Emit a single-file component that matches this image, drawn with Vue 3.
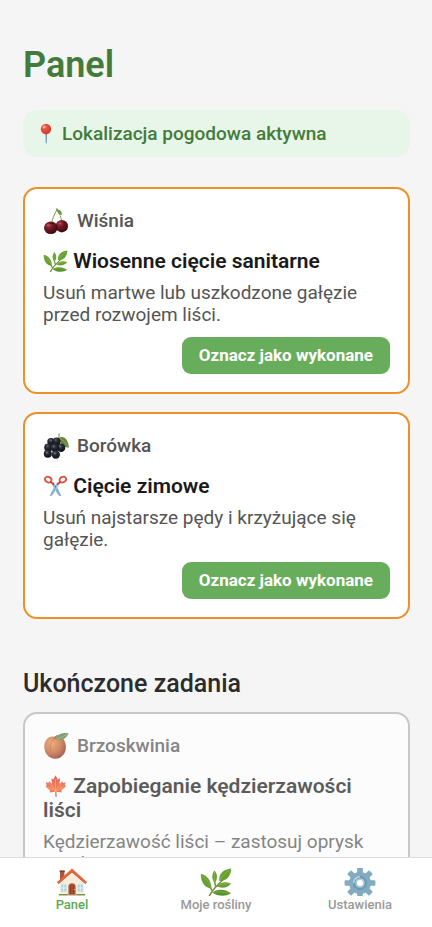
<template>
  <div class="app">
    <!-- kształty ikon używane niżej przez <use> -->
    <svg class="icon-defs" aria-hidden="true">
      <defs>
        <radialGradient id="g-cherry" cx="0.35" cy="0.3" r="0.75">
          <stop offset="0" stop-color="#a83a44" />
          <stop offset="0.35" stop-color="#7a1a26" />
          <stop offset="1" stop-color="#32080f" />
        </radialGradient>
        <radialGradient id="g-berry" cx="0.4" cy="0.32" r="0.7">
          <stop offset="0" stop-color="#5c5e6b" />
          <stop offset="0.35" stop-color="#2b2b37" />
          <stop offset="1" stop-color="#0e0e15" />
        </radialGradient>
        <radialGradient id="g-peach" cx="0.35" cy="0.3" r="0.8">
          <stop offset="0" stop-color="#e9914c" />
          <stop offset="0.5" stop-color="#c75f2b" />
          <stop offset="1" stop-color="#741a10" />
        </radialGradient>
        <linearGradient id="g-maple" x1="0" y1="0" x2="0" y2="1">
          <stop offset="0" stop-color="#d8261c" />
          <stop offset="0.6" stop-color="#f0561f" />
          <stop offset="1" stop-color="#d8301c" />
        </linearGradient>
        <radialGradient id="g-pin" cx="0.35" cy="0.3" r="0.7">
          <stop offset="0" stop-color="#f58a72" />
          <stop offset="0.4" stop-color="#e3503e" />
          <stop offset="1" stop-color="#d23c30" />
        </radialGradient>
      </defs>

      <symbol id="icon-pin" viewBox="0 0 24 24">
        <path d="M11.3 11h1.6l-.3 10-.5 2-.5-2z" fill="#7fa3b8" />
        <path d="M12.3 11h.6l-.4 10-.4 2z" fill="#4f7388" />
        <circle cx="12" cy="6.6" r="5.7" fill="url(#g-pin)" />
        <ellipse cx="9.8" cy="4.5" rx="1.6" ry="1.1" fill="#fbb8a8" opacity="0.8" />
      </symbol>

      <symbol id="icon-cherry" viewBox="0 0 26 28">
        <path d="M14 2.6C11.6 7 9.5 11 8.4 17" fill="none" stroke="#7c9a45" stroke-width="1" />
        <path d="M14 2.6c2.7 4 4.3 8 4.8 13" fill="none" stroke="#8fa554" stroke-width="1" />
        <path d="M13 1.2l2.2.8-1.4 1.6z" fill="#667d35" />
        <path d="M14 2.8c2.2-.8 5 1.2 4.900 5-2.600.2-4.700-1.400-4.900-5z" fill="#669042" />
        <path d="M14.3 3c1.2 2 2.3 3.2 4.3 4.5" fill="none" stroke="#a2bd6c" stroke-width="0.5" />
        <ellipse cx="18.8" cy="19.2" rx="6.2" ry="6.2" fill="url(#g-cherry)" />
        <ellipse cx="7.8" cy="20.8" rx="6.8" ry="6.3" fill="url(#g-cherry)" />
        <ellipse cx="5.2" cy="18.2" rx="1.8" ry="0.7" fill="#ce7078" opacity="0.65" />
        <ellipse cx="17" cy="16.2" rx="1.7" ry="0.7" fill="#c66a70" opacity="0.6" />
        <path d="M6.4 15.8c1.2 1 2.9 1 4 .1" fill="none" stroke="#27070b" stroke-width="0.9" />
      </symbol>

      <symbol id="icon-berry" viewBox="0 0 26 28">
        <path d="M16 1.4c.3 3.6.2 5-2.8 8.6M16.4 6c3 0 4 1.6 4.4 6" fill="none" stroke="#849f4d" stroke-width="1.1" />
        <path d="M16.4 5.8c2.6-2.2 8.4-.6 9.6 9.6-4.6.6-9-2.6-9.6-9.6z" fill="#66813a" />
        <path d="M17.2 6.6c3 1.6 6 4.6 8 8.2" fill="none" stroke="#b2c778" stroke-width="0.6" />
        <circle cx="8" cy="9.6" r="3.7" fill="url(#g-berry)" />
        <circle cx="13.6" cy="9.4" r="3.9" fill="url(#g-berry)" />
        <circle cx="5.2" cy="15.4" r="4" fill="url(#g-berry)" />
        <circle cx="18" cy="15.8" r="4.3" fill="url(#g-berry)" />
        <circle cx="11.6" cy="15.8" r="4.2" fill="url(#g-berry)" />
        <circle cx="4.8" cy="21.8" r="4" fill="url(#g-berry)" />
        <circle cx="12.8" cy="22.6" r="4.2" fill="url(#g-berry)" />
        <g fill="#b9bdca" opacity="0.6">
          <circle cx="8.4" cy="8.2" r="0.6" />
          <circle cx="10.6" cy="14.6" r="0.6" />
          <circle cx="17.4" cy="14.6" r="0.6" />
          <circle cx="3.8" cy="20.6" r="0.6" />
          <circle cx="11.8" cy="21.4" r="0.6" />
        </g>
      </symbol>

      <symbol id="icon-peach" viewBox="0 0 26 28">
        <path d="M12.2 4.8C6 3 1.2 8 1.3 14.8 1.4 21.6 6 26.8 12.2 26.8S22.9 21.6 22.9 15C22.9 8 18.4 3.6 12.2 4.8z" fill="url(#g-peach)" />
        <path d="M12.4 6c-4 2-6 7-5 12.6.6 3.4 2 6 4 7.8" fill="none" stroke="#a64a2b" stroke-width="0.9" opacity="0.75" />
        <path d="M11.2 7c1-2.4 2-3.2 3.6-3.8" fill="none" stroke="#5e4630" stroke-width="1.2" />
        <path d="M12.8 7.6c.8-4.6 5.6-7.4 12.8-6.4-2 5.2-6.6 7.8-12.8 6.4z" fill="#4f7a38" />
        <path d="M13.6 7.2c3.2-1 7-2.6 11.2-5.6" fill="none" stroke="#a9c490" stroke-width="0.6" />
      </symbol>

      <symbol id="icon-leaf" viewBox="0 0 32 28">
        <path d="M9.5 27.6c2.4-4.8 6.8-9.8 14-16.4M12.2 22.8C10.6 19 8 15 3.6 10.6M15.6 18.2c-1-3-1.4-7-1.2-11" fill="none" stroke="#72933a" stroke-width="1.5" stroke-linecap="round" />
        <path d="M11.4 20.4C5 19.8.9 14.8.8 6c6.4 1 10.6 6.6 10.6 14.4z" fill="#68a032" />
        <path d="M14.8 15c-3.2-3.4-3.4-8.4-.4-12.4 3.2 3.4 3.5 8.4.4 12.4z" fill="#68a032" />
        <path d="M19.2 13C18.6 6 23.4 1.2 31.2.6c-.2 7.4-4.4 12.6-12 12.4z" fill="#68a032" />
        <path d="M16.8 18.6c2.8-4.2 8.2-5.6 14.2-3.2-3 4.2-8.6 5.4-14.2 3.2z" fill="#68a032" />
        <path d="M12.4 24.4c4.6-3.6 12.6-3.4 18.6.8-4.6 3.6-13.6 3.2-18.6-.8z" fill="#5a922c" />
        <path d="M2 7.6c4.8 3 7.4 7 9.2 12M14.4 4v10M29.6 2C25 5 22 8 19.8 12.4M29.4 15.6c-5-.2-8.4.8-12 2.8M29 25c-6-1.4-11-1.4-16-.6" fill="none" stroke="#a0c75e" stroke-width="0.5" />
      </symbol>

      <symbol id="icon-scissors" viewBox="0 0 24 24">
        <path d="M7.5 9.2l2.5-1.4c3.2 4.6 6.6 9.6 8.4 15.2-2 .2-3.2-.6-4-2z" fill="#87b3c8" />
        <path d="M16.5 9.2L14 7.8C10.8 12.4 7.4 17.4 5.600 23c2 .2 3.200-.6 4-2z" fill="#9dc4d5" />
        <path d="M12 14.5L6.6 22" stroke="#5f8fa8" stroke-width="0.6" />
        <circle cx="12" cy="12.9" r="0.9" fill="#456f86" />
        <ellipse cx="4" cy="5" rx="3.7" ry="3" transform="rotate(25 4 5)" fill="none" stroke="#e1493a" stroke-width="1.9" />
        <ellipse cx="20" cy="5" rx="3.7" ry="3" transform="rotate(-25 20 5)" fill="none" stroke="#e1493a" stroke-width="1.9" />
        <path d="M6.8 7.6l2.8 2.2M17.2 7.6l-2.8 2.2" stroke="#d84236" stroke-width="2.1" stroke-linecap="round" />
      </symbol>

      <symbol id="icon-maple" viewBox="0 0 24 24">
        <path d="M12 .4l2.5 4.4 2.5-1.2-.7 6.2 3-3 .8 1.8 3-.6-1 3.2 1.4 1-5.2 4.6.6 2.2-5.9-.8.4 5.4h-1.6l-.2-5.4-6.1.8.6-2.2L1 12.200l1.400-1-1-3.200 3 .6.8-1.800 2.900 3-.6-6.200 2.200 1.200z" fill="url(#g-maple)" />
        <path d="M12 18V4.5M12 17.5L5.8 9M12 17.5L18.4 9M12 17.8l-8.2-4.6M12 17.8l8.4-4.6" fill="none" stroke="#ffae52" stroke-width="0.5" />
      </symbol>

      <symbol id="icon-house" viewBox="0 0 32 28">
        <path d="M4 3.4h4.4V13H4z" fill="#a9583f" />
        <path d="M3.6 2.4h5.2v1.8H3.6z" fill="#7e3f2e" />
        <path d="M4 13L16 2.6 28 13v13.8H4z" fill="#f8edda" />
        <path d="M16 .6L.8 14.2l1.6 1.6L16 4l13.6 11.8 1.6-1.6z" fill="#e4683a" />
        <path d="M2.4 15.8L16 4l13.6 11.8" fill="none" stroke="#ad4426" stroke-width="0.7" />
        <path d="M5.2 16.6h5.2v6.8H5.2zM21.6 16.6h5.2v6.8h-5.2z" fill="#a7d5e4" />
        <path d="M7.8 16.6v6.8M5.2 20h5.2M24.2 16.6v6.8M21.6 20h5.2" stroke="#fff" stroke-width="0.7" />
        <path d="M12.4 27v-8.8c0-4 7.2-4 7.2 0V27z" fill="#b1573a" />
        <path d="M14 26v-7.2c0-2 1.4-2.3 1.4-2.3V26zM16.7 26v-9.5s1.4.3 1.4 2.3V26z" fill="#8c3e2a" />
        <circle cx="18.4" cy="21.6" r="0.6" fill="#f1c65d" />
        <path d="M2.8 26h9v1.6h-9zM20.2 26h9v1.6h-9z" fill="#7b9343" />
        <path d="M12 26.6h8v1h-8z" fill="#b7a58f" />
      </symbol>

      <symbol id="icon-gear" viewBox="0 0 32 28">
        <g fill="#83abc0">
          <rect
            v-for="angle in gearAngles"
            :key="angle"
            x="13.2"
            y="-0.4"
            width="5.6"
            height="7"
            rx="0.8"
            :transform="`rotate(${angle} 16 15)`"
          />
          <circle cx="16" cy="15" r="11" />
        </g>
        <circle cx="16" cy="15" r="7.2" fill="#6d9bb4" />
        <path d="M9.6 15a6.4 6.4 0 0 1 6.4-6.4" fill="none" stroke="#c6dfeb" stroke-width="1.4" />
        <circle cx="16" cy="15" r="4.8" fill="#a9cada" />
        <circle cx="16" cy="15" r="3" fill="#fff" />
      </symbol>
    </svg>

    <main class="content">
      <h1 class="page-title">Panel</h1>

      <div class="location-banner">
        <svg class="pin-icon" aria-hidden="true"><use href="#icon-pin" /></svg>
        <span>Lokalizacja pogodowa aktywna</span>
      </div>

      <section class="task-list">
        <article v-for="task in activeTasks" :key="task.id" class="task-card">
          <div class="plant">
            <svg class="plant-icon" aria-hidden="true"><use :href="`#icon-${task.plantIcon}`" /></svg>
            <span>{{ task.plant }}</span>
          </div>
          <h3 class="task-title">
            <svg class="task-icon" aria-hidden="true"><use :href="`#icon-${task.icon}`" /></svg>
            {{ task.title }}
          </h3>
          <p class="task-desc">{{ task.description }}</p>
          <button type="button" class="done-btn" @click="markDone(task)">Oznacz jako wykonane</button>
        </article>
      </section>

      <h2 class="section-title">Ukończone zadania</h2>

      <section class="task-list">
        <article v-for="task in doneTasks" :key="task.id" class="task-card done">
          <div class="plant">
            <svg class="plant-icon" aria-hidden="true"><use :href="`#icon-${task.plantIcon}`" /></svg>
            <span>{{ task.plant }}</span>
          </div>
          <h3 class="task-title">
            <svg class="task-icon" aria-hidden="true"><use :href="`#icon-${task.icon}`" /></svg>
            {{ task.title }}
          </h3>
          <p class="task-desc">{{ task.description }}</p>
        </article>
      </section>
    </main>

    <nav class="tab-bar">
      <button
        v-for="tab in tabs"
        :key="tab.id"
        type="button"
        class="tab"
        :class="{ active: activeTab === tab.id }"
        @click="activeTab = tab.id"
      >
        <svg class="tab-icon" aria-hidden="true"><use :href="`#icon-${tab.icon}`" /></svg>
        <span>{{ tab.label }}</span>
      </button>
    </nav>
  </div>
</template>

<script setup>
import { ref, computed } from 'vue';

const activeTab = ref('panel');

const tabs = [
  { id: 'panel', label: 'Panel', icon: 'house' },
  { id: 'plants', label: 'Moje rośliny', icon: 'leaf' },
  { id: 'settings', label: 'Ustawienia', icon: 'gear' }
];

const tasks = ref([
  {
    id: 1,
    plant: 'Wiśnia',
    plantIcon: 'cherry',
    title: 'Wiosenne cięcie sanitarne',
    icon: 'leaf',
    description: 'Usuń martwe lub uszkodzone gałęzie przed rozwojem liści.',
    done: false
  },
  {
    id: 2,
    plant: 'Borówka',
    plantIcon: 'berry',
    title: 'Cięcie zimowe',
    icon: 'scissors',
    description: 'Usuń najstarsze pędy i krzyżujące się gałęzie.',
    done: false
  },
  {
    id: 3,
    plant: 'Brzoskwinia',
    plantIcon: 'peach',
    title: 'Zapobieganie kędzierzawości liści',
    icon: 'maple',
    description: 'Kędzierzawość liści – zastosuj oprysk miedzią.',
    done: true
  }
]);

const activeTasks = computed(() => tasks.value.filter(task => !task.done));
const doneTasks = computed(() => tasks.value.filter(task => task.done));

// zęby koła zębatego
const gearAngles = [0, 45, 90, 135, 180, 225, 270, 315];

const markDone = (task) => {
  task.done = true;
};
</script>

<style>
body {
  margin: 0;
  background: #f5f5f5;
}
</style>

<style scoped>
.app {
  display: flex;
  flex-direction: column;
  height: 100vh;
  background: #f5f5f5;
  font-family: Roboto, "Noto Sans", sans-serif;
}

.icon-defs {
  position: absolute;
  width: 0;
  height: 0;
}

.content {
  flex: 1;
  min-height: 0;
  overflow-y: auto;
  scrollbar-width: none;
  padding: 43px 22px 24px 23px;
}

.page-title {
  margin: 0 0 23px;
  font-size: 36px;
  line-height: 44px;
  font-weight: 600;
  color: #437c3a;
}

.location-banner {
  display: flex;
  align-items: center;
  gap: 5px;
  margin-bottom: 30px;
  padding: 12px;
  border-radius: 14px;
  background: #e8f5e9;
  color: #437c3a;
  font-size: 19px;
  line-height: 23px;
  font-weight: 500;
}

.pin-icon {
  width: 22px;
  height: 22px;
}

.task-list {
  display: flex;
  flex-direction: column;
  gap: 18px;
}

.task-card {
  display: flex;
  flex-direction: column;
  padding: 18px;
  border: 2px solid #ee9028;
  border-radius: 14px;
  background: #fff;
}

.task-card.done {
  border-color: #b5b5b5;
  opacity: 0.7;
}

.plant {
  display: flex;
  align-items: center;
  gap: 8px;
  margin-bottom: 14px;
  font-size: 19px;
  line-height: 28px;
  font-weight: 500;
  color: #555;
}

.plant-icon {
  width: 26px;
  height: 28px;
}

.task-title {
  margin: 0 0 9px;
  font-size: 21px;
  line-height: 24px;
  font-weight: 600;
  color: #1a1a1a;
}

.task-icon {
  width: 25px;
  height: 22px;
  vertical-align: -4px;
}

.task-desc {
  margin: 0;
  font-size: 19px;
  line-height: 22px;
  color: #555;
}

.done-btn {
  align-self: flex-end;
  margin-top: 11px;
  padding: 8px 17px;
  border: none;
  border-radius: 9px;
  background: #68ad5c;
  color: #fff;
  font-family: inherit;
  font-size: 17px;
  line-height: 21px;
  font-weight: 700;
  cursor: pointer;
}

.section-title {
  margin: 50px 0 13px;
  font-size: 25px;
  line-height: 30px;
  font-weight: 500;
  color: #2c2c2c;
}

.tab-bar {
  display: flex;
  flex: none;
  padding: 10px 0 14px;
  border-top: 1px solid #dcdcdc;
  background: #fff;
}

.tab {
  display: flex;
  flex: 1;
  flex-direction: column;
  align-items: center;
  padding: 0;
  border: none;
  background: none;
  color: #999;
  font-family: inherit;
  font-size: 13px;
  line-height: 17px;
  font-weight: 500;
  cursor: pointer;
}

.tab.active {
  color: #5aaa50;
}

.tab-icon {
  width: 32px;
  height: 28px;
}
</style>
